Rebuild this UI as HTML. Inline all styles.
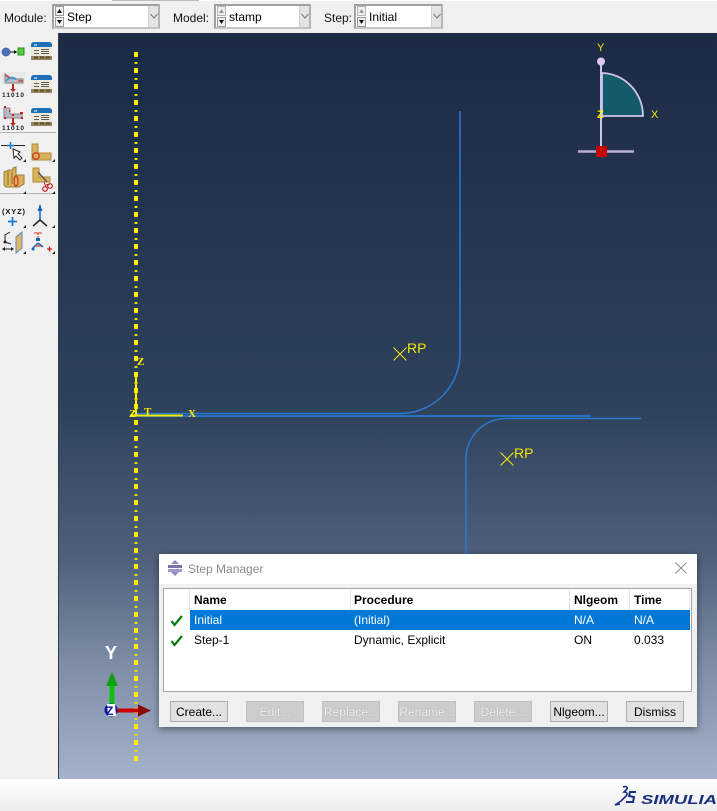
<!DOCTYPE html>
<html><head><meta charset="utf-8">
<style>
html,body{margin:0;padding:0;background:#f0f0f0}
#p{position:relative;width:717px;height:811px;overflow:hidden;background:#f0f0f0;font:12px "Liberation Sans",sans-serif;color:#000}
.a{position:absolute}
.l{position:absolute;top:11px;line-height:14px;color:#111}
.c{position:absolute;top:4px;height:21px;border:2px solid #a0a0a0;border-bottom-color:#c4c4c4;border-right-color:#b4b4b4;background:#fff}
.c .t{position:absolute;left:13px;top:4px;line-height:14px}
.s{position:absolute;left:1px;top:0;width:9px;height:21px}
.d{position:absolute;right:0;top:0;width:10px;height:21px;background:#e4e4e4;border-left:1px solid #cfcfcf;box-sizing:border-box}
.h{position:absolute;top:590px;line-height:20px;font-weight:bold;color:#000;font-size:12px}
.r{position:absolute;line-height:20px;font-size:12px}
.b{position:absolute;top:701px;width:58px;height:21px;box-sizing:border-box;border:1px solid #adadad;background:#e1e1e1;text-align:center;line-height:20px;font-size:12px;color:#000}
.b.x{background:#cccccc;border-color:#bfbfbf;color:#f0f0f0;text-shadow:0 0 1px #8f8f8f}
</style></head><body>
<div id="p">
<div class="a" style="left:0;top:0;width:717px;height:1px;background:#fff"></div>
<div class="a" style="left:112px;top:0;width:87px;height:1px;background:#bdbdbd"></div>

<div class="l" style="left:4px">Module:</div>
<div class="c" style="left:52px;width:104px"><svg class="s" viewBox="0 0 9 21"><rect x=".5" y=".5" width="8" height="9" fill="#f0f0f0" stroke="#9a9a9a"/><rect x=".5" y="11.500" width="8" height="9" fill="#f0f0f0" stroke="#9a9a9a"/><path d="M2 7h5L4.500 3z" fill="#111"/><path d="M2 14h5l-2.500 4z" fill="#111"/></svg><span class="t">Step</span><div class="d"><svg width="9" height="21"><path d="M1.500 8l3.500 4 3.500-4" fill="none" stroke="#777"/></svg></div></div>
<div class="l" style="left:173px">Model:</div>
<div class="c" style="left:214px;width:93px"><svg class="s" viewBox="0 0 9 21"><rect x=".5" y=".5" width="8" height="9" fill="#f0f0f0" stroke="#b5b5b5"/><rect x=".5" y="11.500" width="8" height="9" fill="#f0f0f0" stroke="#9a9a9a"/><path d="M2 7h5L4.500 3z" fill="#999"/><path d="M2 14h5l-2.500 4z" fill="#111"/></svg><span class="t">stamp</span><div class="d"><svg width="9" height="21"><path d="M1.500 8l3.500 4 3.500-4" fill="none" stroke="#777"/></svg></div></div>
<div class="l" style="left:324px">Step:</div>
<div class="c" style="left:354px;width:85px"><svg class="s" viewBox="0 0 9 21"><rect x=".5" y=".5" width="8" height="9" fill="#f0f0f0" stroke="#b5b5b5"/><rect x=".5" y="11.500" width="8" height="9" fill="#f0f0f0" stroke="#9a9a9a"/><path d="M2 7h5L4.500 3z" fill="#999"/><path d="M2 14h5l-2.500 4z" fill="#111"/></svg><span class="t">Initial</span><div class="d"><svg width="9" height="21"><path d="M1.500 8l3.500 4 3.500-4" fill="none" stroke="#777"/></svg></div></div>

<div class="a" style="left:58px;top:33px;width:659px;height:746px;background:linear-gradient(180deg,#1b2a45 0%,#2e415b 50%,#4f5f7a 70%,#7f8ea6 85%,#a4b3ca 100%);border-left:1px solid #333d4c;box-sizing:border-box"></div>
<div class="a" style="left:0;top:779px;width:717px;height:32px;background:linear-gradient(180deg,#fff,#ededed)"></div>

<svg class="a" style="left:0;top:0" width="717" height="811" viewBox="0 0 717 811">
<defs>
<g id="tb"><path d="M0 3q0-3 3-3h15q3 0 3 3v3H0z" fill="#1e70b8"/><rect y="5" width="21" height="10" fill="#ece8da"/><rect y="14" width="21" height="4" fill="#96855a"/><path d="M3 3h3" stroke="#fff"/><path d="M3 8.500h5M3 11.500h5M10 7.500h8M10 9.500h8M10 11.500h8" stroke="#5e5e5e"/><path d="M3 15.500h4M9 15.500h4M15 15.500h4" stroke="#5c5036" stroke-width="2"/></g>
</defs>
<!-- left toolbar -->
<circle cx="6" cy="52" r="4.500" fill="#4a6fb5"/><path d="M10 52h7" stroke="#111"/><path d="M17 52l-3-2v4z" fill="#111"/><rect x="18" y="48" width="6" height="7" fill="#4fd03c" stroke="#2a8a22"/>
<use href="#tb" x="31" y="42"/><use href="#tb" x="31" y="75"/><use href="#tb" x="31" y="108"/>
<rect x="1" y="72" width="24" height="13" fill="#e8e8e8"/><path d="M5 74v9h18v-4H12z" fill="#b9bac8" stroke="#888"/><path d="M6 81q5-6 10-2" stroke="#2aa0e0" fill="none" stroke-width="1.500"/><path d="M5 75l5 3M18 81h5" stroke="#d0342a" stroke-width="1.200"/><path d="M13 84v6" stroke="#b22" stroke-width="2"/><path d="M10 89h6l-3 3z" fill="#b22"/>
<path d="M4 108v10h18v-4H10v-6z" fill="#b9bac8" stroke="#888"/><path d="M4 107h2M4 118h2M12 115h2M20 113h3M21 118h2M9 111h1" stroke="#d0201a" stroke-width="2"/><path d="M13 118v6" stroke="#b22" stroke-width="2"/><path d="M10 123h6l-3 3z" fill="#b22"/>
<text x="2" y="97" font-family="Liberation Sans" font-size="6.500" font-weight="bold" fill="#222" textLength="22">11010</text>
<text x="2" y="130" font-family="Liberation Sans" font-size="6.500" font-weight="bold" fill="#222" textLength="22">11010</text>
<path d="M0 132.500h56M0 193.500h56" stroke="#b5b5b5"/>
<path d="M1 145.500h7M14 145.500h11" stroke="#222"/><path d="M10.500 142v7M7 145.500h7" stroke="#1a78d0" stroke-width="1.500"/>
<path d="M13 149l7 3-2 2 4 4-2 2-4-4-2 2z" fill="#fff" stroke="#222"/>
<path d="M32 144h6v9h13v7H32z" fill="#d9b25b" stroke="#b08a3b"/><circle cx="36" cy="156" r="3.200" fill="none" stroke="#c9301f" stroke-width="1.200"/>
<path d="M4 172l5-2h4v-2l3-1v8h8v9l-5 3H6l-2-2z" fill="#d9b25b" stroke="#9a7c38"/><path d="M8 172v13M12 172v12" stroke="#8c6f30"/><ellipse cx="16" cy="181" rx="2" ry="5" fill="none" stroke="#c9301f" stroke-width="1.200"/>
<path d="M33 168h6v9h11v5H33z" fill="#d9b25b" stroke="#b08a3b"/><path d="M38 172l9 10" stroke="#555" stroke-width="1.500"/><circle cx="45" cy="189" r="2.300" fill="none" stroke="#c01a1a" stroke-width="1.200"/><circle cx="50" cy="186" r="2.300" fill="none" stroke="#c01a1a" stroke-width="1.200"/><path d="M44 182l2 5M50 184l-4 1" stroke="#c01a1a"/>
<text x="2" y="214" font-family="Liberation Sans" font-size="7.500" font-weight="bold" fill="#111" textLength="23">(XYZ)</text>
<path d="M12.500 217v9M8 221.500h9" stroke="#1a78d0" stroke-width="1.800"/>
<path d="M40 205v15" stroke="#1466c0" stroke-width="1.500"/><path d="M40 204l-2.500 7h5z" fill="#1466c0"/><path d="M40 220l-7 6M40 220l7 6" stroke="#222" stroke-width="1.500"/>
<path d="M5 242v-7l5-3M5 242l6 2" stroke="#222" fill="none"/><path d="M3 249h10" stroke="#222"/><path d="M2 249l3-2v4zM14 249l-3-2v4z" fill="#222"/><circle cx="5" cy="242" r="1.500" fill="#222"/>
<path d="M16 237l6-5v16l-6 5z" fill="#e0b866" stroke="#5a8ac0"/>
<path d="M34 233h8" stroke="#d0342a"/><path d="M38 233v6" stroke="#d0342a" stroke-dasharray="2 1"/><path d="M36 238h4v3h-4z" fill="#1466c0"/><path d="M38 243l-5 5M38 243l5 4" stroke="#1466c0" stroke-width="1.500"/><path d="M35 246h6" stroke="#d0342a" stroke-width="1.200"/><path d="M47 249h5M49.500 246.500v5" stroke="#d0201a" stroke-width="1.300"/><circle cx="33" cy="249" r="1.500" fill="#1466c0"/>
<path fill="#222" d="M26 162v-3l-3 3zM55 162v-3l-3 3zM26 194v-3l-3 3zM55 194v-3l-3 3zM26 228v-3l-3 3zM55 228v-3l-3 3zM26 254v-3l-3 3zM55 254v-3l-3 3z"/>

<!-- geometry -->
<path d="M460 111V353A60 60 0 0 1 400 413.500H136" fill="none" stroke="#2a7ad2" stroke-width="1.500"/>
<path d="M136 416H591" stroke="#2570c2" stroke-width="2"/>
<path d="M641 418.500H506A40 40 0 0 0 466 458V554" fill="none" stroke="#2a7ad2" stroke-width="1.500"/>
<!-- yellow dashes -->
<path d="M136 52V762" stroke="#ffee00" stroke-width="4" stroke-dasharray="5 11"/>
<path d="M136 62V762" stroke="#e8dc00" stroke-width="3" stroke-dasharray="2 14"/>
<path d="M136 372V416" stroke="#ffee00" stroke-width="2"/>
<path d="M130 415.500H183" stroke="#f0e800" stroke-width="2"/>
<g font-family="Liberation Serif" font-weight="bold" fill="#ffee00" font-size="11">
<text x="137" y="365">Z</text><text x="129" y="417">Z</text><text x="144" y="415">T</text><text x="188" y="417">X</text>
</g>
<!-- RP -->
<path d="M393.500 347.500l13 13M406.500 347.500l-13 13M500.500 452.500l13 13M513.500 452.500l-13 13" stroke="#f4e800" stroke-width="1"/>
<g font-family="Liberation Sans" font-size="14" fill="#f4e800"><text x="407" y="353">RP</text><text x="514" y="458">RP</text></g>

<!-- top-right triad -->
<path d="M602 116V73A42 43 0 0 1 643 116Z" fill="#155a6b" stroke="#cfc4ea" stroke-width="1.800"/>
<path d="M601 62V152" stroke="#cfc4ea" stroke-width="2"/>
<circle cx="601" cy="61.500" r="4" fill="#d9c9f0"/>
<path d="M578 151.500H634" stroke="#b9afd6" stroke-width="2.400"/>
<rect x="596" y="146" width="11" height="11" fill="#c40808"/>
<g font-family="Liberation Sans" font-size="11" fill="#f4e800"><text x="597" y="51">Y</text><text x="651" y="118">X</text><text x="597" y="118" font-weight="bold" fill="#ffee00">Z</text></g>

<!-- bottom-left triad -->
<text x="105" y="659" font-family="Liberation Sans" font-weight="bold" font-size="18" fill="#fff">Y</text>
<path d="M112 705V684" stroke="#10c010" stroke-width="5"/>
<path d="M112 672l-6 14h12z" fill="#0ca00c"/>
<path d="M117 710.500H138" stroke="#c80000" stroke-width="4"/>
<path d="M151 710.500l-13-6v12z" fill="#8e0808"/>
<circle cx="111" cy="710" r="6.500" fill="#0a16a0"/>
<path d="M107 704h8l1 12h-8z" fill="#fff"/>
<text x="106" y="715" font-family="Liberation Sans" font-weight="bold" font-size="12" fill="#0a16a0">Z</text>

<!-- simulia -->
<path d="M623 787c3-1 5 0 4 2l-3 3c3 0 4 2 2 4l-5 5-6 4 5-1" fill="none" stroke="#17307f" stroke-width="1.600"/>
<path d="M636 792h-6l-1 4 5 1-1 5h-7" fill="none" stroke="#17307f" stroke-width="2"/>
<text x="641" y="804" font-family="Liberation Sans" font-weight="bold" font-style="italic" font-size="13" fill="#17307f" textLength="76" lengthAdjust="spacingAndGlyphs">SIMULIA</text>
</svg>

<!-- dialog -->
<div class="a" style="left:159px;top:554px;width:538px;height:173px;background:#f0f0f0;box-shadow:0 2px 7px rgba(0,0,0,.45)"></div>
<div class="a" style="left:159px;top:554px;width:538px;height:30px;background:#fff"></div>
<svg class="a" style="left:167px;top:560px" width="16" height="17"><path d="M8 0l4 4H4zM8 16l4-4H4z" fill="#8d8cb8"/><rect x="1" y="5" width="14" height="3" fill="#7675a8"/><rect x="1" y="9" width="14" height="3" fill="#9d9cc4"/></svg>
<div class="a" style="left:188px;top:562px;line-height:14px;color:#8a8a8a;font-size:12px">Step Manager</div>
<svg class="a" style="left:675px;top:562px" width="12" height="12"><path d="M.5.500l11 11M11.500.500l-11 11" stroke="#8c8c8c" stroke-width="1"/></svg>

<div class="a" style="left:163px;top:588px;width:529px;height:104px;box-sizing:border-box;border:1px solid #a6a6a6;background:#fff"></div>
<div class="a" style="left:190px;top:610px;width:500px;height:20px;background:#0078d7"></div>
<div class="a" style="left:350px;top:590px;width:1px;height:20px;background:#e5e5e5"></div>
<div class="a" style="left:189px;top:590px;width:1px;height:20px;background:#e5e5e5"></div>
<div class="a" style="left:569px;top:590px;width:1px;height:20px;background:#e5e5e5"></div>
<div class="a" style="left:629px;top:590px;width:1px;height:20px;background:#e5e5e5"></div>
<div class="a" style="left:689px;top:590px;width:1px;height:20px;background:#e5e5e5"></div>
<div class="h" style="left:194px">Name</div>
<div class="h" style="left:354px">Procedure</div>
<div class="h" style="left:574px">Nlgeom</div>
<div class="h" style="left:634px">Time</div>
<svg class="a" style="left:170px;top:614px" width="14" height="34"><path d="M1.500 7l3 4L12 2" fill="none" stroke="#0a7a0a" stroke-width="2.200"/><path d="M1.500 27l3 4L12 22" fill="none" stroke="#0a7a0a" stroke-width="2.200"/></svg>
<div class="r" style="left:194px;top:610px;color:#fff">Initial</div>
<div class="r" style="left:354px;top:610px;color:#fff">(Initial)</div>
<div class="r" style="left:574px;top:610px;color:#fff">N/A</div>
<div class="r" style="left:634px;top:610px;color:#fff">N/A</div>
<div class="r" style="left:194px;top:630px">Step-1</div>
<div class="r" style="left:354px;top:630px">Dynamic, Explicit</div>
<div class="r" style="left:574px;top:630px">ON</div>
<div class="r" style="left:634px;top:630px">0.033</div>

<div class="b" style="left:170px">Create...</div>
<div class="b x" style="left:246px">Edit...</div>
<div class="b x" style="left:322px">Replace...</div>
<div class="b x" style="left:398px">Rename...</div>
<div class="b x" style="left:474px">Delete...</div>
<div class="b" style="left:550px">Nlgeom...</div>
<div class="b" style="left:626px">Dismiss</div>
</div>
</body></html>
